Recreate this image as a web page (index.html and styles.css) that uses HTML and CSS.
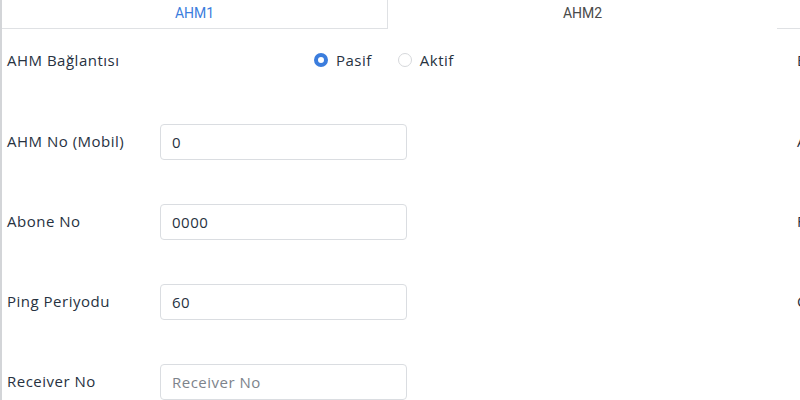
FILE: index.html
```html
<!DOCTYPE html>
<html lang="tr">
<head>
    <meta charset="UTF-8">
    <meta name="viewport" content="width=device-width, initial-scale=1.0">
    <link rel="stylesheet" href="styles.css">
    <title>AHM Ayarları</title>
</head>
<body>

    <div class="panel">

        <div class="tabs">
            <div class="tab tab-link">AHM1</div>
            <div class="tab tab-active">AHM2</div>
            <div class="tab-fill"></div>
        </div>

        <form class="form">

            <div class="col">
                <div class="row row-first">
                    <label class="label">AHM Bağlantısı</label>
                    <div class="radios">
                        <label class="radio"><span class="dot checked"></span>Pasif</label>
                        <label class="radio"><span class="dot"></span>Aktif</label>
                    </div>
                </div>
                <div class="row">
                    <label class="label">AHM No (Mobil)</label>
                    <input class="field" type="text" value="0">
                </div>
                <div class="row">
                    <label class="label">Abone No</label>
                    <input class="field" type="text" value="0000">
                </div>
                <div class="row">
                    <label class="label">Ping Periyodu</label>
                    <input class="field" type="text" value="60">
                </div>
                <div class="row">
                    <label class="label">Receiver No</label>
                    <input class="field" type="text" placeholder="Receiver No">
                </div>
            </div>

            <div class="col">
                <div class="row row-first">
                    <label class="label">Bağlantı Tipi</label>
                </div>
                <div class="row">
                    <label class="label">APN</label>
                    <input class="field" type="text">
                </div>
                <div class="row">
                    <label class="label">Firma Kodu</label>
                    <input class="field" type="text">
                </div>
                <div class="row">
                    <label class="label">Cihaz No</label>
                    <input class="field" type="text">
                </div>
            </div>

        </form>

    </div>

</body>
</html>
```

FILE: styles.css
```css
body {
    margin: 0;
    background-color: #fff;
    font-family: "Open Sans", "Noto Sans", sans-serif;
    color: #27323f;
    overflow: hidden;
}

.panel {
    border-left: 2px solid #d3d5d8;
    height: 400px;
}

.tabs {
    display: flex;
    height: 29px;
}

.tab {
    font-family: Roboto, "Liberation Sans", sans-serif;
    font-size: 14px;
    line-height: 26px;
    text-align: center;
    box-sizing: border-box;
}

.tab-link {
    width: 386px;
    color: #3b7ddd;
    border-right: 1px solid #dfe1e4;
    border-bottom: 1px solid #dfe1e4;
}

.tab-active {
    width: 389px;
    color: #4a4a4a;
}

.tab-fill {
    flex: 1;
    border-bottom: 1px solid #dfe1e4;
}

.form {
    display: grid;
    grid-template-columns: 790px 790px;
    padding: 13px 0 0 5px;
}

.col {
    display: flex;
    flex-direction: column;
    gap: 44px;
}

.row {
    display: grid;
    grid-template-columns: 153px 247px;
    align-items: center;
    height: 36px;
}

.row-first {
    margin-bottom: 2px;
}

.label {
    font-size: 15px;
    letter-spacing: 0.5px;
    color: #27323f;
    margin-top: -3px;
}

.row-first .label {
    margin-top: 0;
}

.radios {
    display: flex;
    align-items: center;
    gap: 26px;
    padding-left: 154px;
    white-space: nowrap;
}

.radio {
    display: flex;
    align-items: center;
    gap: 8px;
    font-size: 15px;
    letter-spacing: 0.5px;
}

.dot {
    width: 14px;
    height: 14px;
    border-radius: 50%;
    border: 1px solid #d6d8db;
    box-sizing: border-box;
}

.dot.checked {
    border: 4px solid #3b7ddd;
    background-color: #fff;
}

.field {
    height: 36px;
    box-sizing: border-box;
    border: 1px solid #dadde1;
    border-radius: 4px;
    padding: 0 11px;
    font-family: "Open Sans", "Noto Sans", sans-serif;
    font-size: 15px;
    letter-spacing: 0.5px;
    color: #27323f;
    outline: none;
}

.field::placeholder {
    color: #7d838b;
}
```
